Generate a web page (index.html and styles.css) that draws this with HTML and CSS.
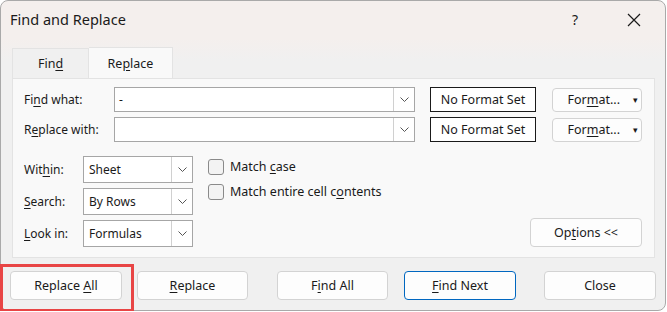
FILE: index.html
```html
<!DOCTYPE html>
<html lang="en">
<head>
  <meta charset="UTF-8" />
  <title>Find and Replace</title>
  <link rel="stylesheet" href="styles.css">
</head>
<body>
  <div class="window">
    <div class="titlebar">
      <span class="title">Find and Replace</span>
      <span class="help">?</span>
      <svg class="close-x" width="14" height="14" viewBox="0 0 14 14"><path d="M1 1 L13 13 M13 1 L1 13" stroke="#1a1a1a" stroke-width="1.2" fill="none"/></svg>
    </div>

    <div class="tabs">
      <div class="tab">Fin<u>d</u></div>
      <div class="tab active">Re<u>p</u>lace</div>
    </div>

    <div class="panel">
      <div class="field-row">
        <label class="field-label">Fi<u>n</u>d what:</label>
        <div class="combo wide">
          <span class="combo-text">-</span>
          <span class="combo-btn"><svg width="9" height="5" viewBox="0 0 9 5"><polyline points="0.5,0.5 4.5,4.5 8.5,0.5" fill="none" stroke="#555" stroke-width="1"/></svg></span>
        </div>
        <div class="format-box">No Format Set</div>
        <button class="btn format-btn"><span>For<u>m</u>at...</span><span class="caret">▾</span></button>
      </div>
      <div class="field-row">
        <label class="field-label">R<u>e</u>place with:</label>
        <div class="combo wide">
          <span class="combo-text"></span>
          <span class="combo-btn"><svg width="9" height="5" viewBox="0 0 9 5"><polyline points="0.5,0.5 4.5,4.5 8.5,0.5" fill="none" stroke="#555" stroke-width="1"/></svg></span>
        </div>
        <div class="format-box">No Format Set</div>
        <button class="btn format-btn"><span>For<u>m</u>at...</span><span class="caret">▾</span></button>
      </div>

      <div class="options">
        <div class="selects">
          <div class="select-row">
            <label class="opt-label">Wit<u>h</u>in:</label>
            <div class="combo small">
              <span class="combo-text">Sheet</span>
              <span class="combo-btn"><svg width="9" height="5" viewBox="0 0 9 5"><polyline points="0.5,0.5 4.5,4.5 8.5,0.5" fill="none" stroke="#555" stroke-width="1"/></svg></span>
            </div>
          </div>
          <div class="select-row">
            <label class="opt-label"><u>S</u>earch:</label>
            <div class="combo small">
              <span class="combo-text">By Rows</span>
              <span class="combo-btn"><svg width="9" height="5" viewBox="0 0 9 5"><polyline points="0.5,0.5 4.5,4.5 8.5,0.5" fill="none" stroke="#555" stroke-width="1"/></svg></span>
            </div>
          </div>
          <div class="select-row">
            <label class="opt-label"><u>L</u>ook in:</label>
            <div class="combo small">
              <span class="combo-text">Formulas</span>
              <span class="combo-btn"><svg width="9" height="5" viewBox="0 0 9 5"><polyline points="0.5,0.5 4.5,4.5 8.5,0.5" fill="none" stroke="#555" stroke-width="1"/></svg></span>
            </div>
          </div>
        </div>
        <div class="checks">
          <label class="check"><span class="box"></span><span>Match <u>c</u>ase</span></label>
          <label class="check"><span class="box"></span><span>Match entire cell c<u>o</u>ntents</span></label>
        </div>
        <button class="btn options-btn">Op<u>t</u>ions &lt;&lt;</button>
      </div>
    </div>

    <div class="footer">
      <button class="btn foot-btn replace-all">Replace <u>A</u>ll</button>
      <button class="btn foot-btn replace"><u>R</u>eplace</button>
      <button class="btn foot-btn find-all">F<u>i</u>nd All</button>
      <button class="btn foot-btn find-next"><u>F</u>ind Next</button>
      <button class="btn foot-btn close">Close</button>
    </div>
  </div>

  <div class="highlight"></div>
</body>
</html>
```

FILE: styles.css
```css
* {
  box-sizing: border-box;
}
body {
  margin: 0;
  position: relative;
  background: #ffffff;
  font-family: 'Noto Sans', 'Open Sans', sans-serif;
  font-size: 12px;
  color: #1a1a1a;
}
u {
  text-decoration-thickness: 1px;
  text-underline-offset: 2px;
}
.window {
  width: 666px;
  height: 311px;
  border: 1px solid #a9a9a9;
  border-radius: 8px;
  background: linear-gradient(#f4efed 0, #f4efed 38px, #f0f0f0 60px, #f0f0f0 100%);
  overflow: hidden;
}
.titlebar {
  display: flex;
  align-items: center;
  height: 38px;
  padding-left: 9px;
}
.title {
  font-size: 14.5px;
  flex: 1;
  margin-top: -2px;
}
.help {
  font-size: 14px;
  margin-right: 49px;
  margin-top: -2px;
}
.close-x {
  margin-right: 24px;
}
.tabs {
  display: flex;
  align-items: flex-end;
  margin-left: 11px;
  margin-top: 8px;
  height: 31px;
}
.tab {
  height: 30px;
  width: 77px;
  display: flex;
  align-items: center;
  justify-content: center;
  font-size: 12.5px;
  background: #f0f0f0;
  border: 1px solid #e3e3e3;
  border-bottom: none;
  color: #1a1a1a;
}
.tab.active {
  height: 31px;
  width: 84px;
  background: #f9f9f9;
  border-left: none;
}
.panel {
  margin: 0 10px 0 11px;
  height: 180px;
  background: #f9f9f9;
  border: 1px solid #e3e3e3;
  padding: 8px 12px 0 11px;
}
.field-row {
  display: flex;
  align-items: center;
  height: 25px;
  margin-bottom: 5px;
}
.field-label {
  width: 90px;
}
.combo {
  display: flex;
  background: #ffffff;
  border: 1px solid #a6a6a6;
  align-items: stretch;
}
.combo.wide {
  width: 301px;
  height: 25px;
}
.combo.small {
  width: 110px;
  height: 27px;
}
.combo-text {
  flex: 1;
  padding-left: 4px;
  display: flex;
  align-items: center;
}
.combo.small .combo-text {
  padding-left: 5px;
}
.combo-btn {
  width: 21px;
  border-left: 1px solid #d0d0d0;
  display: flex;
  align-items: center;
  justify-content: center;
}
.format-box {
  margin-left: 15px;
  width: 106px;
  height: 25px;
  border: 1px solid #1a1a1a;
  background: #ffffff;
  display: flex;
  align-items: center;
  justify-content: center;
  font-size: 12.5px;
}
.btn {
  font-family: inherit;
  font-size: 12px;
  color: #1a1a1a;
  background: #fdfdfd;
  border: 1px solid #d3d3d3;
  border-radius: 4px;
  padding: 0;
}
.format-btn {
  margin-left: 16px;
  width: 90px;
  height: 24px;
  display: flex;
  align-items: center;
  justify-content: flex-end;
  padding-right: 3px;
  font-size: 12.5px;
}
.caret {
  font-size: 9px;
  margin-left: 13px;
}
.options {
  display: flex;
  margin-top: 14px;
}
.selects {
  display: flex;
  flex-direction: column;
  gap: 5px;
}
.select-row {
  display: flex;
  align-items: center;
}
.opt-label {
  width: 59px;
}
.checks {
  display: flex;
  flex-direction: column;
  gap: 8px;
  margin-left: 15px;
  padding-top: 2px;
}
.check {
  display: flex;
  align-items: center;
  height: 17px;
  font-size: 12.5px;
}
.box {
  width: 16px;
  height: 16px;
  border: 1px solid #8a8a8a;
  border-radius: 3px;
  background: #f3f3f3;
  margin-right: 6px;
}
.options-btn {
  margin-left: auto;
  align-self: flex-end;
  width: 112px;
  height: 29px;
  font-size: 12.5px;
}
.footer {
  display: flex;
  padding: 13px 0 0 9px;
}
.foot-btn {
  width: 112px;
  height: 29px;
  font-size: 12.5px;
}
.replace {
  margin-left: 15px;
  width: 111px;
}
.find-all {
  margin-left: 29px;
  width: 111px;
}
.find-next {
  margin-left: 16px;
  border-color: #0067c0;
}
.close {
  margin-left: 28px;
}
.highlight {
  position: absolute;
  left: 0;
  top: 264px;
  width: 134px;
  height: 48px;
  border: 3px solid #e84545;
}
```
